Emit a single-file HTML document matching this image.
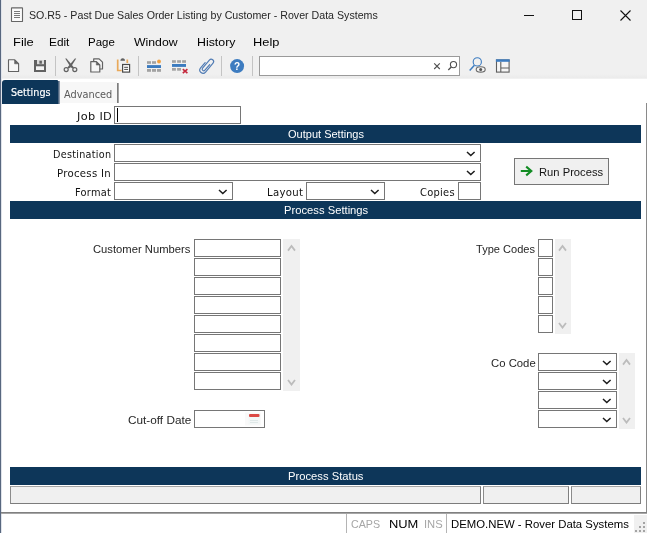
<!DOCTYPE html>
<html><head><meta charset="utf-8"><title>SO.R5 - Past Due Sales Order Listing by Customer</title>
<style>
html,body{margin:0;padding:0;}
body{width:647px;height:533px;overflow:hidden;background:#fff;position:relative;font-family:"Liberation Sans",sans-serif;font-size:12px;color:#000;}
#win{position:absolute;left:0;top:0;width:647px;height:533px;will-change:transform;}
#win div,#win span,#win svg{position:absolute;box-sizing:border-box;}
.tx{white-space:nowrap;transform-origin:0 50%;}
.ui,.bar{font-family:"Liberation Sans",sans-serif;}
.lbl,.tab{font-family:"DejaVu Sans","Liberation Sans",sans-serif;}
.lbl{letter-spacing:0.3px;color:#111;}
div.bar{background:#0d3659;}
.inp{background:#fff;border:1px solid #767676;}
.st{background:#f0f0f0;border:1px solid;border-color:#a4a4a4 #808080 #7c7c7c #8c8c8c;}
</style></head>
<body>
<div id="win">
<div style="left:0px;top:0px;width:647px;height:78px;background:#f0f0f0;"></div>
<div style="left:0px;top:74px;width:647px;height:4px;background:linear-gradient(#f0f0f0,#ebebeb);"></div>
<div style="left:0px;top:78px;width:647px;height:1px;background:#f1f1f1;"></div>
<svg style="left:10px;top:7px" width="14" height="16" viewBox="0 0 14 16"><rect x="1.500" y="0.900" width="11" height="13.600" rx="0.300" fill="#fbfbfb" stroke="#666" stroke-width="1.100"/><path d="M4 4.500h6M4 6.500h6M4 8.500h6M4 10.500h6" stroke="#7a7a7a" stroke-width="1"/></svg>
<span class="tx ui" style="left:28.617px;top:9px;font-size:10.6px;line-height:12px;transform:scaleX(1.004);color:#262626;">SO.R5 - Past Due Sales Order Listing by Customer - Rover Data Systems</span>
<svg style="left:522px;top:10px" width="14" height="12" viewBox="0 0 14 12"><path d="M2 5.500h10" stroke="#111" stroke-width="1"/></svg>
<svg style="left:571px;top:9px" width="12" height="12" viewBox="0 0 12 12"><rect x="1.500" y="1.500" width="9" height="9" fill="none" stroke="#111"/></svg>
<svg style="left:619px;top:9px" width="13" height="13" viewBox="0 0 13 13"><path d="M1.500 1.500l10 10M11.500 1.500l-10 10" stroke="#111" stroke-width="1.100" fill="none"/></svg>
<span class="tx ui" style="left:12.625px;top:35px;font-size:11.8px;line-height:14px;transform:scaleX(1.094);">File</span>
<span class="tx ui" style="left:49.316px;top:35px;font-size:11.8px;line-height:14px;transform:scaleX(1.002);">Edit</span>
<span class="tx ui" style="left:88.075px;top:35px;font-size:11.8px;line-height:14px;transform:scaleX(0.973);">Page</span>
<span class="tx ui" style="left:133.771px;top:35px;font-size:11.8px;line-height:14px;transform:scaleX(1.039);">Window</span>
<span class="tx ui" style="left:196.649px;top:35px;font-size:11.8px;line-height:14px;transform:scaleX(1.048);">History</span>
<span class="tx ui" style="left:253.277px;top:35px;font-size:11.8px;line-height:14px;transform:scaleX(1.086);">Help</span>
<div style="left:259px;top:56px;width:201px;height:20px;background:#fff;border:1px solid #9a9a9a;"></div>
<svg style="left:0;top:50px" width="647" height="30" viewBox="0 50 647 30"><path d="M8.500 59.800h6.300l3.800 3.800v7.900h-10.100z" fill="#f6f6f6" stroke="#626262" stroke-width="1.100" stroke-linejoin="round"/><path d="M14.600 60v3.800h3.800z" fill="#626262" stroke="#626262" stroke-width="0.600"/><rect x="34" y="60" width="12" height="12" fill="#626262"/><rect x="37" y="60" width="7" height="4.200" fill="#dcdcdc"/><rect x="39.400" y="60.700" width="2.500" height="3" fill="#626262"/><rect x="36" y="66.300" width="8" height="3.700" fill="#f4f4f4"/><rect x="55" y="56" width="1" height="20" fill="#c4c4c4"/><rect x="138" y="56" width="1" height="20" fill="#c4c4c4"/><rect x="221" y="56" width="1" height="20" fill="#c4c4c4"/><rect x="252" y="56" width="1" height="20" fill="#c4c4c4"/><path d="M65.200 58.400L66.500 58.400L74 67.600L72.600 68.400L70.700 67.200z" fill="#626262"/><path d="M76.200 58.400L74.900 58.400L67.400 67.600L68.800 68.400L70.700 67.200z" fill="#626262"/><circle cx="66.200" cy="69.600" r="2" fill="none" stroke="#626262" stroke-width="1.200"/><circle cx="74.800" cy="69.600" r="2" fill="none" stroke="#626262" stroke-width="1.200"/><path d="M93.700 58.800h5.400l3.400 3.400v6.800h-8.800z" fill="#f6f6f6" stroke="#626262" stroke-width="1.200" stroke-linejoin="round"/><path d="M90.800 61.600h5.600l3.400 3.400v7h-9z" fill="#f6f6f6" stroke="#626262" stroke-width="1.200" stroke-linejoin="round"/><path d="M96.300 61.800v3.300h3.300z" fill="#626262" stroke="#626262" stroke-width="0.500"/><path d="M117.700 59.500v11h4M127.300 59.500v3.500" fill="none" stroke="#e9a95a" stroke-width="1.700"/><path d="M120.400 60.700c0 -1.500 0.800 -2.500 2.300 -2.500s2.300 1 2.300 2.500z" fill="#626262"/><rect x="122.600" y="64.500" width="7" height="7.600" fill="#fff" stroke="#4a4a4a" stroke-width="1.200"/><path d="M124.200 67.300h3.900M124.200 69.400h3.900" stroke="#4a4a4a" stroke-width="1"/><g fill="#a2a2a2"><rect x="147" y="61.200" width="4" height="2.600"/><rect x="152" y="61.200" width="4" height="2.600"/><rect x="147" y="69" width="4" height="2.800"/><rect x="152" y="69" width="4" height="2.800"/><rect x="157" y="69" width="4" height="2.800"/></g><rect x="147" y="65.100" width="14" height="2.900" fill="#3b7bbf"/><circle cx="159" cy="61.500" r="1.900" fill="#f0a040"/><g fill="#a2a2a2"><rect x="172" y="60.200" width="3.900" height="2.600"/><rect x="177.100" y="60.200" width="3.900" height="2.600"/><rect x="182.100" y="60.200" width="3.900" height="2.600"/><rect x="172" y="68" width="3.900" height="2.700"/><rect x="177.100" y="68" width="3.900" height="2.700"/></g><rect x="172" y="64" width="14" height="2.900" fill="#3b7bbf"/><path d="M182.800 69.200l4.600 4M187.400 69.200l-4.600 4" stroke="#c4283c" stroke-width="1.600"/><path transform="translate(206.500 65.900) rotate(40) translate(-3.250 -8.700)" d="M0 7L0 14A3.250 3.250 0 0 0 6.500 14L6.500 2.400A2.400 2.400 0 0 0 1.700 2.400L1.700 13A1.550 1.550 0 0 0 4.800 13L4.800 5.600" fill="none" stroke="#4f7bb4" stroke-width="1.150" stroke-linecap="round"/><circle cx="237.100" cy="66.100" r="7" fill="#3d7cc0"/><text x="237.100" y="69.700" text-anchor="middle" font-family="Liberation Sans, sans-serif" font-weight="bold" font-size="10" fill="#fff">?</text><path d="M434.200 63.400l5.600 5.600M439.800 63.400l-5.600 5.600" stroke="#505050" stroke-width="1.100"/><circle cx="453.500" cy="64.600" r="3.100" fill="none" stroke="#505050" stroke-width="1.100"/><path d="M451.300 67l-3 3" stroke="#505050" stroke-width="1.300"/><circle cx="477.300" cy="61.900" r="4.100" fill="none" stroke="#3d7cc0" stroke-width="1.100"/><path d="M474.400 65.200L469.700 70.400" stroke="#3d7cc0" stroke-width="1.500"/><ellipse cx="480.700" cy="69.400" rx="4.500" ry="2.700" fill="#f4f4f4" stroke="#6a6a6a" stroke-width="1.100"/><circle cx="480.700" cy="69.400" r="1.500" fill="#555"/><rect x="496.500" y="60" width="12.600" height="12.100" fill="#f6f6f6" stroke="#5e5e5e" stroke-width="1.100"/><rect x="495.900" y="59.300" width="13.800" height="2.500" fill="#3d7cc0"/><path d="M500.800 62v10M500.800 68h8.300" stroke="#5e5e5e" stroke-width="1.100" fill="none"/></svg>
<div style="left:0px;top:0px;width:1px;height:533px;background:#58677f;"></div>
<div style="left:1px;top:0px;width:1px;height:533px;background:#dfe3ea;"></div>
<div style="left:646px;top:103px;width:1px;height:410px;background:#8a8a8a;"></div>
<div style="left:2px;top:80px;width:56px;height:24px;background:#0d3659;border-radius:3px 1px 0 0;"></div>
<div style="left:58px;top:81px;width:1px;height:23px;background:#4f6781;"></div>
<div style="left:59px;top:81px;width:1px;height:23px;background:#8a97a8;"></div>
<span class="tx tab" style="left:10.935px;top:86px;font-size:11px;line-height:13px;transform:scaleX(0.876);color:#fff;-webkit-text-stroke:0.2px #fff;">Settings</span>
<div style="left:60px;top:82px;width:57px;height:21px;background:#f7f7f7;"></div>
<div style="left:117px;top:83px;width:1px;height:20px;background:#7e7e7e;"></div>
<div style="left:118px;top:83px;width:1px;height:20px;background:#a4a4a4;"></div>
<span class="tx tab" style="left:64.164px;top:88px;font-size:11px;line-height:13px;transform:scaleX(0.889);color:#5a5a5a;">Advanced</span>
<span class="tx lbl" style="left:76.762px;top:110px;font-size:10.6px;line-height:12px;transform:scaleX(1.071);">Job ID</span>
<div class="inp" style="left:114px;top:106px;width:127px;height:18px;border-color:#767676;"></div>
<div style="left:117px;top:108px;width:1px;height:14px;background:#000;"></div>
<div class="bar" style="left:10px;top:125px;width:631px;height:18px;"></div>
<span class="tx bar" style="left:288.301px;top:128px;font-size:11.5px;line-height:12px;transform:scaleX(0.958);color:#fff;">Output Settings</span>
<span class="tx lbl" style="left:52.697px;top:148px;font-size:10.6px;line-height:12px;transform:scaleX(0.911);">Destination</span>
<div class="inp" style="left:114px;top:144px;width:367px;height:18px;border-color:#767676;"></div>
<svg style="left:464.8px;top:149.8px" width="11.6" height="7.5" viewBox="0 0 11.6 7.5"><path d="M2 2L5.8 5.5L9.6 2" fill="none" stroke="#1c1c1c" stroke-width="1.5"/></svg>
<span class="tx lbl" style="left:57.012px;top:167px;font-size:10.6px;line-height:12px;transform:scaleX(0.957);">Process In</span>
<div class="inp" style="left:114px;top:163px;width:367px;height:18px;border-color:#767676;"></div>
<svg style="left:464.8px;top:168.8px" width="11.6" height="7.5" viewBox="0 0 11.6 7.5"><path d="M2 2L5.8 5.5L9.6 2" fill="none" stroke="#1c1c1c" stroke-width="1.5"/></svg>
<span class="tx lbl" style="left:74.877px;top:186px;font-size:10.6px;line-height:12px;transform:scaleX(0.926);">Format</span>
<div class="inp" style="left:114px;top:182px;width:119px;height:18px;border-color:#767676;"></div>
<svg style="left:216.8px;top:187.8px" width="11.6" height="7.5" viewBox="0 0 11.6 7.5"><path d="M2 2L5.8 5.5L9.6 2" fill="none" stroke="#1c1c1c" stroke-width="1.5"/></svg>
<span class="tx lbl" style="left:266.987px;top:186px;font-size:10.6px;line-height:12px;transform:scaleX(0.959);">Layout</span>
<div class="inp" style="left:306px;top:182px;width:79px;height:18px;border-color:#767676;"></div>
<svg style="left:368.8px;top:187.8px" width="11.6" height="7.5" viewBox="0 0 11.6 7.5"><path d="M2 2L5.8 5.5L9.6 2" fill="none" stroke="#1c1c1c" stroke-width="1.5"/></svg>
<span class="tx lbl" style="left:420.19px;top:186px;font-size:10.6px;line-height:12px;transform:scaleX(0.933);">Copies</span>
<div class="inp" style="left:458px;top:182px;width:23px;height:18px;border-color:#767676;"></div>
<div style="left:514px;top:158px;width:95px;height:27px;background:#f0f0f0;border:1px solid #767676;"></div>
<svg style="left:519px;top:164px" width="16" height="14" viewBox="0 0 16 14"><path d="M1.800 7h11M7.200 2.600L12.300 7l-5.100 4.400" stroke="#128c24" stroke-width="2.100" fill="none"/></svg>
<span class="tx bar" style="left:539.183px;top:166px;font-size:11.5px;line-height:12px;transform:scaleX(0.974);color:#141414;">Run Process</span>
<div class="bar" style="left:10px;top:201px;width:631px;height:18px;"></div>
<span class="tx bar" style="left:283.571px;top:204px;font-size:11.5px;line-height:12px;transform:scaleX(0.976);color:#fff;">Process Settings</span>
<span class="tx ui" style="left:92.686px;top:243px;font-size:11.3px;line-height:12px;transform:scaleX(0.994);color:#262626;">Customer Numbers</span>
<div class="inp" style="left:194px;top:239px;width:87px;height:18px;border-color:#767676;"></div>
<div class="inp" style="left:194px;top:258px;width:87px;height:18px;border-color:#767676;"></div>
<div class="inp" style="left:194px;top:277px;width:87px;height:18px;border-color:#767676;"></div>
<div class="inp" style="left:194px;top:296px;width:87px;height:18px;border-color:#767676;"></div>
<div class="inp" style="left:194px;top:315px;width:87px;height:18px;border-color:#767676;"></div>
<div class="inp" style="left:194px;top:334px;width:87px;height:18px;border-color:#767676;"></div>
<div class="inp" style="left:194px;top:353px;width:87px;height:18px;border-color:#767676;"></div>
<div class="inp" style="left:194px;top:372px;width:87px;height:18px;border-color:#767676;"></div>
<div style="left:283px;top:239px;width:17px;height:152px;background:#f0f0f0;"></div>
<svg style="left:285.6px;top:243.8px" width="11" height="8.6" viewBox="0 0 11 8.6"><path d="M2 6.6L5.5 2L9 6.6" fill="none" stroke="#bcbcbc" stroke-width="1.8"/></svg>
<svg style="left:285.6px;top:377.6px" width="11" height="8.6" viewBox="0 0 11 8.6"><path d="M2 2L5.5 6.6L9 2" fill="none" stroke="#bcbcbc" stroke-width="1.8"/></svg>
<span class="tx ui" style="left:475.769px;top:243px;font-size:11.3px;line-height:12px;transform:scaleX(0.979);color:#262626;">Type Codes</span>
<div class="inp" style="left:538px;top:239px;width:15px;height:18px;border-color:#767676;"></div>
<div class="inp" style="left:538px;top:258px;width:15px;height:18px;border-color:#767676;"></div>
<div class="inp" style="left:538px;top:277px;width:15px;height:18px;border-color:#767676;"></div>
<div class="inp" style="left:538px;top:296px;width:15px;height:18px;border-color:#767676;"></div>
<div class="inp" style="left:538px;top:315px;width:15px;height:18px;border-color:#767676;"></div>
<div style="left:555px;top:239px;width:16px;height:95px;background:#f0f0f0;"></div>
<svg style="left:557.1px;top:243.8px" width="11" height="8.6" viewBox="0 0 11 8.6"><path d="M2 6.6L5.5 2L9 6.6" fill="none" stroke="#bcbcbc" stroke-width="1.8"/></svg>
<svg style="left:557.1px;top:320.6px" width="11" height="8.6" viewBox="0 0 11 8.6"><path d="M2 2L5.5 6.6L9 2" fill="none" stroke="#bcbcbc" stroke-width="1.8"/></svg>
<span class="tx ui" style="left:490.577px;top:357px;font-size:11.3px;line-height:12px;transform:scaleX(1.003);color:#262626;">Co Code</span>
<div class="inp" style="left:538px;top:353px;width:79px;height:18px;border-color:#767676;"></div>
<svg style="left:600.8px;top:358.8px" width="11.6" height="7.5" viewBox="0 0 11.6 7.5"><path d="M2 2L5.8 5.5L9.6 2" fill="none" stroke="#1c1c1c" stroke-width="1.5"/></svg>
<div class="inp" style="left:538px;top:372px;width:79px;height:18px;border-color:#767676;"></div>
<svg style="left:600.8px;top:377.8px" width="11.6" height="7.5" viewBox="0 0 11.6 7.5"><path d="M2 2L5.8 5.5L9.6 2" fill="none" stroke="#1c1c1c" stroke-width="1.5"/></svg>
<div class="inp" style="left:538px;top:391px;width:79px;height:18px;border-color:#767676;"></div>
<svg style="left:600.8px;top:396.8px" width="11.6" height="7.5" viewBox="0 0 11.6 7.5"><path d="M2 2L5.8 5.5L9.6 2" fill="none" stroke="#1c1c1c" stroke-width="1.5"/></svg>
<div class="inp" style="left:538px;top:410px;width:79px;height:18px;border-color:#767676;"></div>
<svg style="left:600.8px;top:415.8px" width="11.6" height="7.5" viewBox="0 0 11.6 7.5"><path d="M2 2L5.8 5.5L9.6 2" fill="none" stroke="#1c1c1c" stroke-width="1.5"/></svg>
<div style="left:619px;top:353px;width:16px;height:76px;background:#f0f0f0;"></div>
<svg style="left:621.1px;top:357.8px" width="11" height="8.6" viewBox="0 0 11 8.6"><path d="M2 6.6L5.5 2L9 6.6" fill="none" stroke="#bcbcbc" stroke-width="1.8"/></svg>
<svg style="left:621.1px;top:415.6px" width="11" height="8.6" viewBox="0 0 11 8.6"><path d="M2 2L5.5 6.6L9 2" fill="none" stroke="#bcbcbc" stroke-width="1.8"/></svg>
<span class="tx ui" style="left:127.556px;top:414px;font-size:11.3px;line-height:12px;transform:scaleX(1.042);color:#262626;">Cut-off Date</span>
<div class="inp" style="left:194px;top:410px;width:71px;height:18px;border-color:#767676;"></div>
<svg style="left:244px;top:412px" width="18" height="14" viewBox="0 0 18 14"><rect x="1" y="0.500" width="16" height="13" fill="#f9f9f9"/><rect x="4.500" y="2" width="11.500" height="10.500" fill="#f3f7f7"/><rect x="5" y="2" width="10.500" height="3" rx="1" fill="#dc4a45"/><path d="M6 8.500h8M6 10.500h8" stroke="#dfe8e8" stroke-width="1"/></svg>
<div class="bar" style="left:10px;top:467px;width:631px;height:18px;"></div>
<span class="tx bar" style="left:287.961px;top:470px;font-size:11.5px;line-height:12px;transform:scaleX(0.976);color:#fff;">Process Status</span>
<div class="st" style="left:10px;top:486px;width:471px;height:18px;"></div>
<div class="st" style="left:483px;top:486px;width:86px;height:18px;"></div>
<div class="st" style="left:571px;top:486px;width:70px;height:18px;"></div>
<div style="left:1px;top:512px;width:646px;height:1px;background:#808080;"></div>
<div style="left:1px;top:513px;width:646px;height:1px;background:#a6a6a6;"></div>
<div style="left:346px;top:514px;width:1px;height:19px;background:#b4b4b4;"></div>
<div style="left:446px;top:514px;width:1px;height:19px;background:#b4b4b4;"></div>
<span class="tx ui" style="left:350.643px;top:517px;font-size:11.8px;line-height:14px;transform:scaleX(0.906);color:#a6a6a6;">CAPS</span>
<span class="tx ui" style="left:388.513px;top:517px;font-size:11.8px;line-height:14px;transform:scaleX(1.093);">NUM</span>
<span class="tx ui" style="left:423.836px;top:517px;font-size:11.8px;line-height:14px;transform:scaleX(0.948);color:#a6a6a6;">INS</span>
<span class="tx ui" style="left:450.773px;top:517px;font-size:11.8px;line-height:14px;transform:scaleX(0.962);">DEMO.NEW - Rover Data Systems</span>
<div style="left:634px;top:515px;width:13px;height:18px;background:#f0f0f0;"></div>
<svg style="left:635px;top:521px" width="12" height="12" viewBox="0 0 12 12"><g fill="#a4a4a4"><rect x="8" y="1" width="2" height="2"/><rect x="8" y="5" width="2" height="2"/><rect x="4" y="5" width="2" height="2"/><rect x="8" y="9" width="2" height="2"/><rect x="4" y="9" width="2" height="2"/><rect x="0" y="9" width="2" height="2"/></g></svg>
</div>
</body></html>
